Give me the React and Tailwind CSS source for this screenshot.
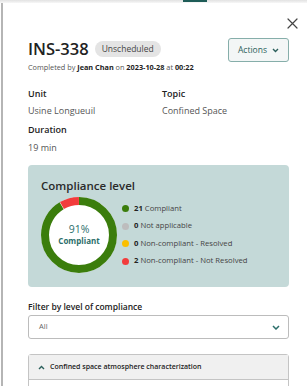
import React from "react";

const legend = [
  { n: 21, label: "Compliant", dot: "bg-[#3b7d0c]" },
  { n: 0, label: "Not applicable", dot: "bg-[#bdbdbd]" },
  { n: 0, label: "Non-compliant - Resolved", dot: "bg-[#fbbf00]" },
  { n: 2, label: "Non-compliant - Not Resolved", dot: "bg-[#f23c3c]" },
];

function Donut() {
  const r = 34;
  const c = 2 * Math.PI * r;
  const green = c * (21 / 23);
  const red = c - green;
  return (
    <svg width="76" height="76" viewBox="0 0 76 76" className="shrink-0">
      <circle cx="38" cy="38" r="38" fill="white" />
      <g transform="rotate(-90 38 38)">
        <circle
          cx="38"
          cy="38"
          r={r}
          fill="none"
          stroke="#3b7d0c"
          strokeWidth="8"
          strokeDasharray={`${green} ${c}`}
        />
        <circle
          cx="38"
          cy="38"
          r={r}
          fill="none"
          stroke="#f23c3c"
          strokeWidth="8"
          strokeDasharray={`${red - 0.8} ${c}`}
          strokeDashoffset={-(green + 0.4)}
        />
      </g>
      <text x="38" y="36" textAnchor="middle" fontSize="10.5" fill="#2b6e6a" fontFamily="Open Sans, sans-serif">
        91%
      </text>
      <text x="38" y="47" textAnchor="middle" fontSize="8" fontWeight="700" fill="#2b6e6a" fontFamily="Open Sans, sans-serif">
        Compliant
      </text>
    </svg>
  );
}

export default function App() {
  return (
    <div className="w-[307px] h-[386px] overflow-hidden bg-white flex flex-col font-['Open_Sans',sans-serif] text-[#333]">
      {/* top bar shadow */}
      <div className="h-[3px] shrink-0 bg-gradient-to-b from-[#e2e2e2] to-[#f7f7f7]">
        <div className="ml-[183px] w-[24px] h-[2px] bg-[#1e5c57]" />
      </div>

      <div className="flex flex-1 min-h-0">
        <div className="ml-[1px] w-[1.5px] bg-[#b5b5b5]" />

        <div className="flex-1 pl-[25.5px] pr-[18px]">
          {/* close */}
          <div className="flex justify-end pt-[15px] -mr-[9px]">
            <svg width="11" height="11" viewBox="0 0 11 11">
              <path d="M1 1 L10 10 M10 1 L1 10" stroke="#444" strokeWidth="1.2" strokeLinecap="round" />
            </svg>
          </div>

          {/* title row */}
          <div className="flex justify-between items-start mt-[9px]">
            <div className="pt-[1px]">
              <div className="flex items-center gap-[6px]">
                <span className="text-[16.5px] leading-[20px] font-semibold text-[#222]">INS-338</span>
                <span className="h-[16px] px-[7px] rounded-full bg-[#e4e4e4] text-[8.5px] leading-[16px] text-[#444]">
                  Unscheduled
                </span>
              </div>
              <div className="mt-[3px] text-[7.3px] leading-[10px] text-[#555] whitespace-nowrap">
                Completed by <b className="text-[#222]">Jean Chan</b> on <b className="text-[#222]">2023-10-28</b> at{" "}
                <b className="text-[#222]">00:22</b>
              </div>
            </div>
            <button className="w-[61px] h-[24px] rounded-[3px] border border-[#86aeaa] bg-[#f3f6f6] flex items-center justify-center gap-[5px] text-[8.5px] text-[#2b5f5b]">
              Actions
              <svg width="7" height="5" viewBox="0 0 7 5">
                <path d="M1 1 L3.5 3.5 L6 1" fill="none" stroke="#2b5f5b" strokeWidth="1.4" />
              </svg>
            </button>
          </div>

          {/* details */}
          <div className="grid grid-cols-[134px_1fr] mt-[13px] text-[9px]">
            <div className="leading-[17px] font-semibold text-[#222]">Unit</div>
            <div className="leading-[17px] font-semibold text-[#222]">Topic</div>
            <div className="leading-[17px] text-[#555]">Usine Longueuil</div>
            <div className="leading-[17px] text-[#555]">Confined Space</div>
            <div className="leading-[19px] mt-[1px] font-semibold text-[#222] col-span-2">Duration</div>
            <div className="leading-[17px] text-[#555]">19 min</div>
          </div>

          {/* compliance card */}
          <div className="mt-[9px] h-[122px] rounded-[4px] bg-[#c4d9d8] px-[13px] pt-[13px]">
            <div className="text-[11.5px] leading-[16px] font-semibold text-[#2a2a2a]">Compliance level</div>
            <div className="flex items-start gap-[5px] mt-[3px]">
              <Donut />
              <div className="flex flex-col pt-[3px]">
                {legend.map((l) => (
                  <div key={l.label} className="flex items-center h-[17.5px] gap-[5px] text-[7.7px] text-[#444]">
                    <span className={`w-[7px] h-[7px] rounded-full ${l.dot}`} />
                    <span>
                      <b className="text-[#222]">{l.n}</b> {l.label}
                    </span>
                  </div>
                ))}
              </div>
            </div>
          </div>

          {/* filter */}
          <div className="mt-[14px] text-[8.5px] leading-[12px] font-semibold text-[#222]">
            Filter by level of compliance
          </div>
          <div className="mt-[2px] h-[24px] rounded-[3px] border border-[#bcbcbc] flex items-center justify-between pl-[10px] pr-[8px]">
            <span className="text-[7.5px] text-[#666]">All</span>
            <svg width="8" height="5" viewBox="0 0 8 5">
              <path d="M1 1 L4 4 L7 1" fill="none" stroke="#2b6e6a" strokeWidth="1.5" />
            </svg>
          </div>

          {/* accordion */}
          <div className="mt-[15px] rounded-t-[3px] border border-[#c4c4c4]">
            <div className="h-[25px] bg-[#f0f0f0] border-b border-[#c4c4c4] flex items-center gap-[5px] pl-[9px]">
              <svg width="7" height="5" viewBox="0 0 7 5">
                <path d="M1 4 L3.5 1.5 L6 4" fill="none" stroke="#2b5f5b" strokeWidth="1.4" />
              </svg>
              <span className="text-[7px] font-semibold text-[#222]">Confined space atmosphere characterization</span>
            </div>
            <div className="h-[20px] bg-white" />
          </div>
        </div>
      </div>
    </div>
  );
}
